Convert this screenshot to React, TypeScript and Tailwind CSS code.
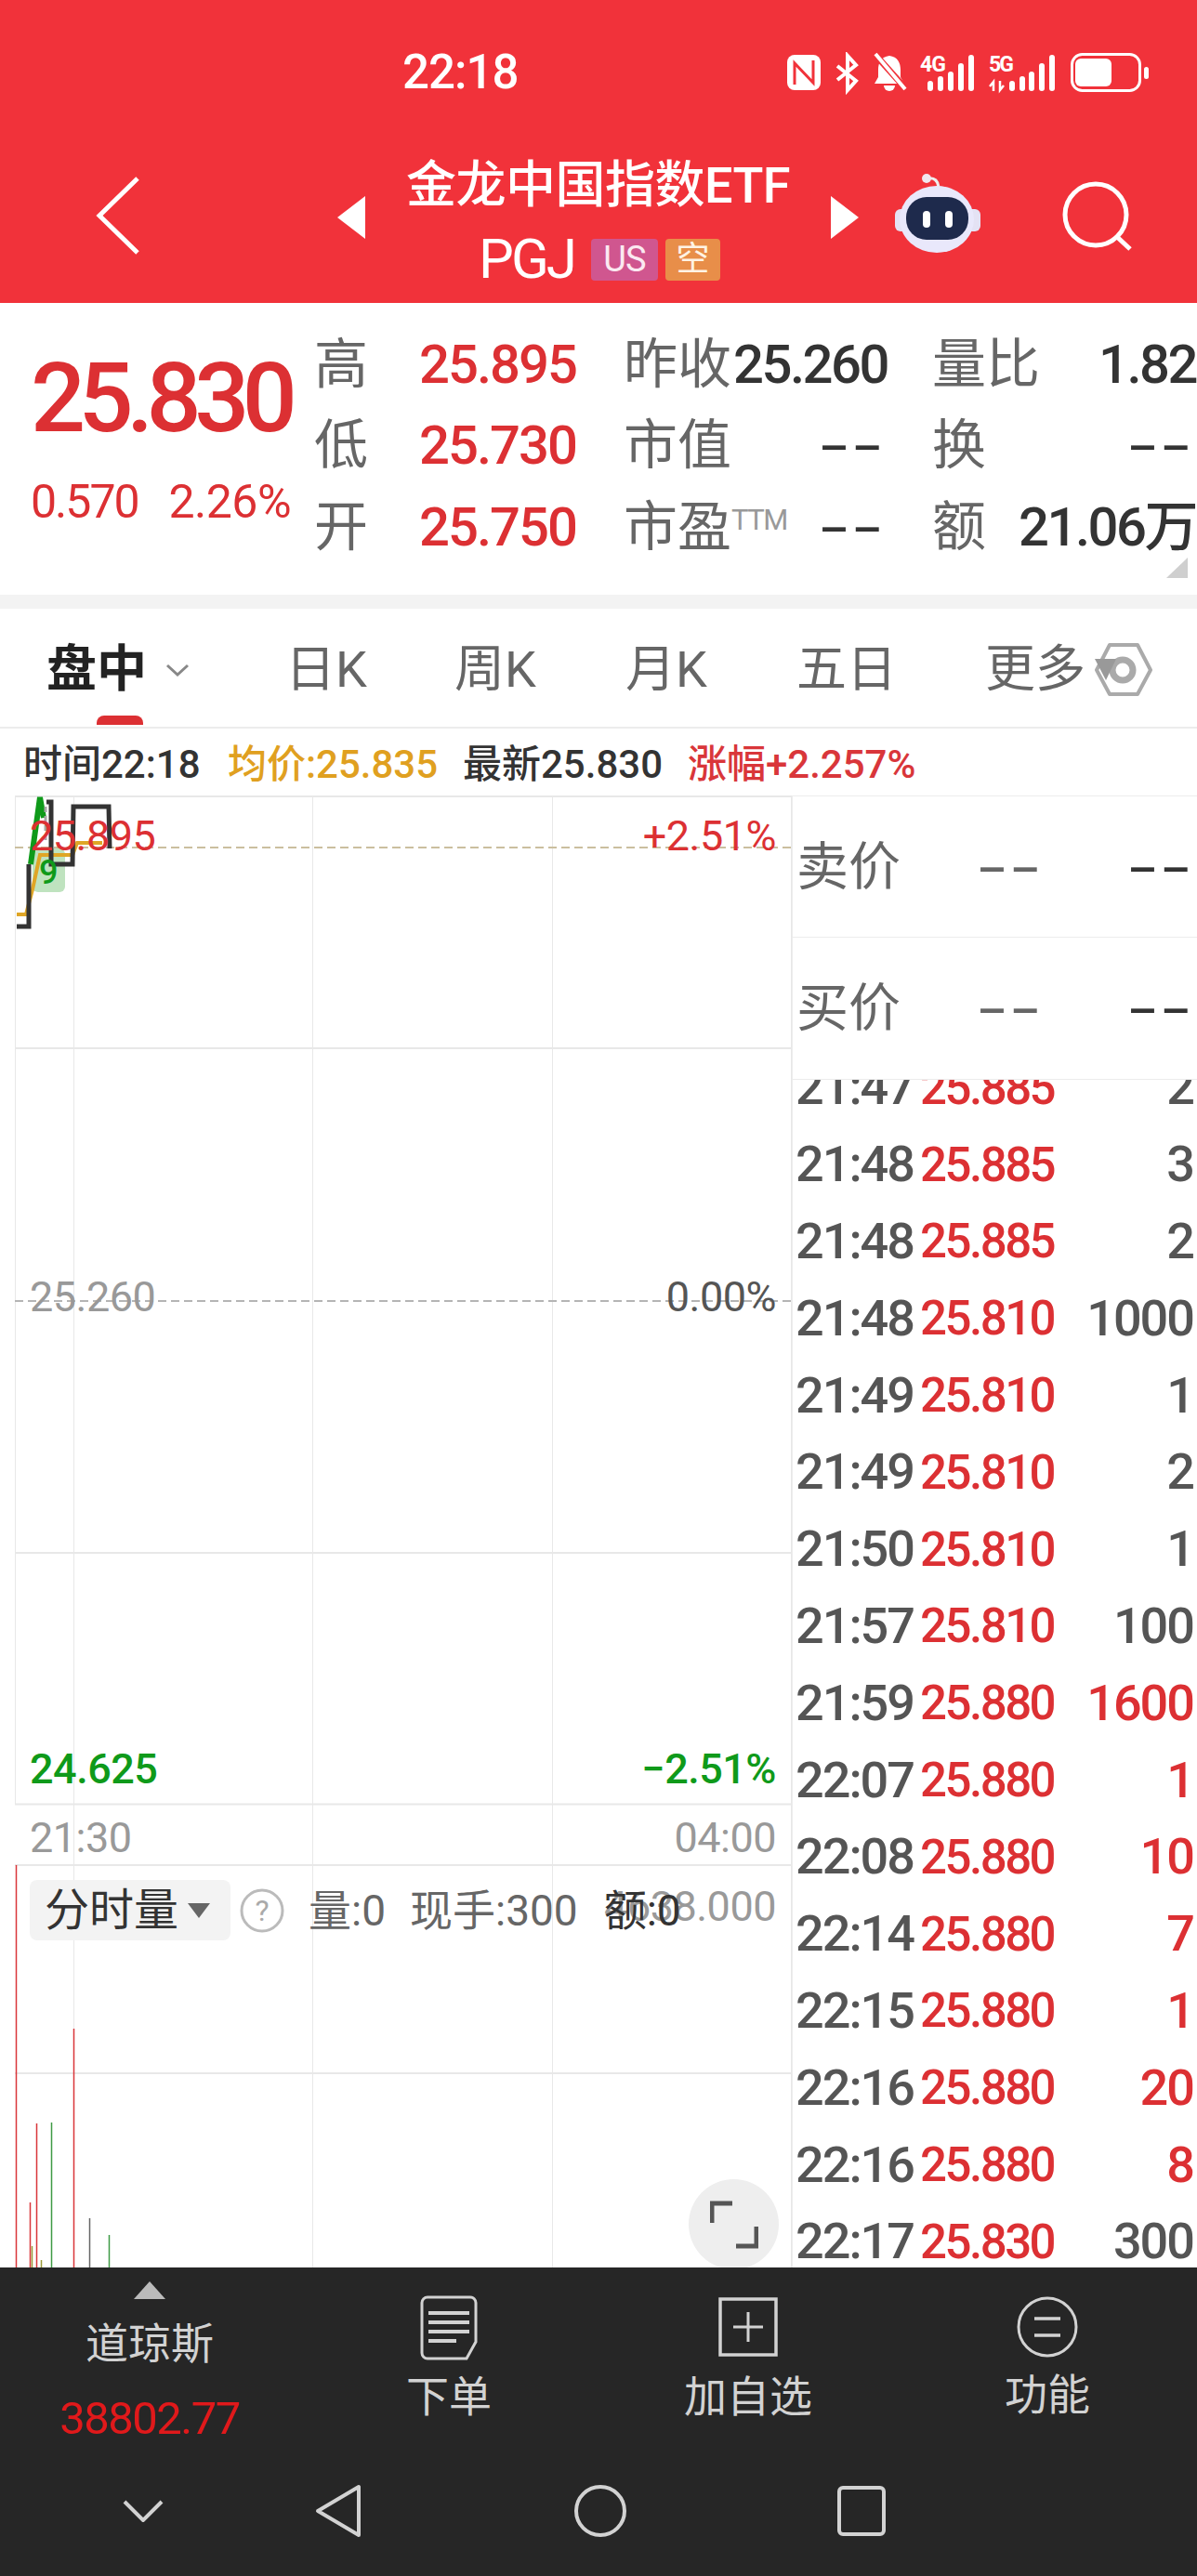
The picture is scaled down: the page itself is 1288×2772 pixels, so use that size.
import React from 'react';

const trades: [string, string, string, boolean][] = [
    ['21:47', '25.885', '2', false],
    ['21:48', '25.885', '3', false],
    ['21:48', '25.885', '2', false],
    ['21:48', '25.810', '1000', false],
    ['21:49', '25.810', '1', false],
    ['21:49', '25.810', '2', false],
    ['21:50', '25.810', '1', false],
    ['21:57', '25.810', '100', false],
    ['21:59', '25.880', '1600', true],
    ['22:07', '25.880', '1', true],
    ['22:08', '25.880', '10', true],
    ['22:14', '25.880', '7', true],
    ['22:15', '25.880', '1', true],
    ['22:16', '25.880', '20', true],
    ['22:16', '25.880', '8', true],
    ['22:17', '25.830', '300', false],
];

const StatusIcons = () => (
    <svg width="392" height="46" viewBox="846 56 392 46" fill="none">
        <rect x="847" y="59" width="36" height="38" rx="8" fill="#fff" />
        <path d="M855 91V68L875 89V65" stroke="#f1323a" strokeWidth="3" />
        <path d="M901 71L921 87L912 97V60L921 70L901 86" stroke="#fff" strokeWidth="4" />
        <path d="M957 60c-9 1-12 8-12 15v8l-4 7h32l-4-7v-8c0-7-3-14-12-15z" fill="#fff" />
        <path d="M951 92h12a6 6 0 0 1-12 0z" fill="#fff" />
        <path d="M941 58L976 97" stroke="#f1323a" strokeWidth="7" />
        <path d="M942 58L974 96" stroke="#fff" strokeWidth="4" />
        <text x="990" y="77" fill="#fff" fontSize="23" fontWeight="700" fontFamily="Roboto" textLength="28">4G</text>
        {[[998, 87], [1009, 82], [1020, 77], [1031, 68], [1042, 59]].map(([x, y]) => (
            <rect key={x} x={x} y={y} width="6" height={98 - y} rx="3" fill="#fff" />
        ))}
        <text x="1064" y="77" fill="#fff" fontSize="23" fontWeight="700" fontFamily="Roboto" textLength="27">5G</text>
        <path d="M1069 98V88l-4 5M1076 87v10l4-5" stroke="#fff" strokeWidth="2.500" />
        {[[1086, 87], [1097, 82], [1107, 77], [1118, 68], [1129, 59]].map(([x, y]) => (
            <rect key={x} x={x} y={y} width="6" height={98 - y} rx="3" fill="#fff" />
        ))}
        <rect x="1153.500" y="58.500" width="73" height="39" rx="11" stroke="#fff" strokeWidth="3" />
        <rect x="1157" y="63" width="39" height="30" rx="6" fill="#fff" />
        <rect x="1231" y="72" width="5" height="13" rx="2.500" fill="#fff" />
    </svg>
);

const Robot = () => (
    <svg width="94" height="86" viewBox="962 187 94 86">
        <path d="M998 192c7-1 11 2 12 9" stroke="#eee" strokeWidth="3" fill="none" />
        <circle cx="997" cy="192" r="5" fill="#f1e6ee" />
        <rect x="963" y="225" width="92" height="24" rx="6" fill="#e4e2f4" />
        <ellipse cx="1008" cy="236" rx="40" ry="36" fill="#e9e8fb" />
        <rect x="975" y="212" width="67" height="46" rx="22" fill="#1e2a4c" />
        <rect x="993" y="227" width="8" height="18" rx="4" fill="#fff" />
        <rect x="1017" y="227" width="8" height="18" rx="4" fill="#fff" />
    </svg>
);

const Tri = ({ dir }: { dir: 'l' | 'r' }) => (
    <svg width="30" height="46" viewBox="0 0 30 46" fill="#fff">
        <path d={dir === 'l' ? 'M30 0V46L0 23z' : 'M0 0V46L30 23z'} />
    </svg>
);

const PriceChart = () => (
    <svg className="absolute inset-0" width="852" height="1584" viewBox="0 856 852 1584" fill="none">
        {/* grid */}
        <path d="M16 857H851M16 1128H851M16 1671H851M16 1941.500H851M16 2007H851M16 2231H851" stroke="#e8e8e8" strokeWidth="2" />
        <path d="M16.500 856V1941M851.500 856V2440M79.500 856V2440M336.500 856V2440M594.500 856V2440" stroke="#e8e8e8" strokeWidth="1" />
        <path d="M16 1400H851" stroke="#b5b5b5" strokeWidth="2" strokeDasharray="9 5" />
        <path d="M16 912H851" stroke="#cbbf9f" strokeWidth="2" strokeDasharray="9 5" />
        {/* badge */}
        <rect x="35" y="913" width="35" height="47" rx="6" fill="#bfe3bf" />
        {/* avg line */}
        <path d="M18 984H28L35 957L43 920H78L83 907H110" stroke="#dfa626" strokeWidth="4" />
        {/* price */}
        <path d="M18 997H31V930" stroke="#333" strokeWidth="5" />
        <path d="M50 863H55V930H78L79 868H117L118 913" stroke="#333" strokeWidth="5" />
        <path d="M33 930L43 858L47 880" stroke="#0f9a1a" strokeWidth="6" />
        <path d="M49 868V905" stroke="#a8a8a8" strokeWidth="3" strokeDasharray="6 4" />
        {/* volume */}
        <path d="M17.500 2007V2440M39.500 2285V2440M79.500 2183V2440M32.500 2370V2440" stroke="#d9363a" strokeWidth="1.500" />
        <path d="M55.500 2284V2440M117.500 2405V2440" stroke="#3f9a45" strokeWidth="1.500" />
        <path d="M96.500 2387V2440" stroke="#666" strokeWidth="1.500" />
        <path d="M34.500 2417V2440M44.500 2432V2440" stroke="#9a9a3a" strokeWidth="1.500" />
    </svg>
);

const Dash = ({ className }: { className: string }) => (
    <span className={`inline-block origin-right scale-x-[1.7] -mt-[4px] font-['Liberation_Sans',sans-serif] text-[60px] leading-none tracking-[1px] ${className}`}>--</span>
);

const QuoteCell = ({ label, sup, children }: { label: string; sup?: string; children: React.ReactNode }) => (
    <div className="flex items-center justify-between h-[87.500px]">
        <span className="text-[58px] leading-none text-[#666] flex items-start">
            {label}
            {sup && <span className="text-[31px] leading-none mt-[6px] tracking-[-1.500px] text-[#999]">{sup}</span>}
        </span>
        {children}
    </div>
);

const Red = ({ v }: { v: string }) => (
    <span className="text-[58px] leading-none font-medium tracking-[-2px] text-[#dc3033]">{v}</span>
);
const Dark = ({ v }: { v: string }) => (
    <span className="text-[58px] leading-none font-medium tracking-[-2.500px] -mr-[3px] text-[#333]">{v}</span>
);

export default function App() {
    return (
        <div className="w-[1288px] h-[2772px] overflow-hidden bg-white flex flex-col font-[Roboto,'Noto_Sans_CJK_SC',sans-serif]">
            {/* header */}
            <div className="h-[326px] bg-[#f1323a] text-white">
                <div className="h-[156px] flex items-start pt-[56px] pl-[433px] pr-[50px]">
                    <span className="text-[51px] leading-[44px] font-medium tracking-[-1px]">22:18</span>
                    <div className="ml-auto">
                        <StatusIcons />
                    </div>
                </div>
                <div className="flex items-start">
                    <svg className="ml-[103px] mt-[34px]" width="48" height="84" viewBox="0 0 48 84" fill="none">
                        <path d="M45 2L4 42L45 82" stroke="#fff" strokeWidth="5" />
                    </svg>
                    <div className="ml-[212px] mt-[55px]">
                        <Tri dir="l" />
                    </div>
                    <div className="w-[501px] flex flex-col items-center">
                        <div className="text-[54px] leading-[60px] mt-[14px] font-medium tracking-[-0.500px] whitespace-nowrap">金龙中国指数ETF</div>
                        <div className="flex items-center mt-[26px] pl-[3px]">
                            <span className="text-[60px] leading-[46px] tracking-[-3px]">PGJ</span>
                            <span className="ml-[18px] w-[72px] h-[45px] rounded bg-[#d0568f] flex items-center justify-center text-[38px] leading-none tracking-[-1px] text-[#fbe9f1]">US</span>
                            <span className="ml-[8px] w-[59px] h-[45px] rounded bg-[#e88e49] flex items-center justify-center text-[36px] leading-none text-[#fff3e4]">空</span>
                        </div>
                    </div>
                    <div className="mt-[55px]">
                        <Tri dir="r" />
                    </div>
                    <div className="ml-[38px] mt-[31px]">
                        <Robot />
                    </div>
                    <svg className="ml-[86px] mt-[38px]" width="80" height="80" viewBox="0 0 80 80" fill="none">
                        <circle cx="37" cy="37" r="33" stroke="#fff" strokeWidth="5" />
                        <path d="M60 61L74 74" stroke="#fff" strokeWidth="5" />
                    </svg>
                </div>
            </div>

            {/* quote */}
            <div className="h-[314px] relative flex">
                <div className="w-[338px] pl-[33px]">
                    <div className="mt-[53px] text-[104px] leading-[100px] font-medium tracking-[-7.500px] text-[#dc3033]">25.830</div>
                    <div className="mt-[36px] w-[280px] flex justify-between text-[50px] leading-[50px] tracking-[-2px] text-[#dc3033]">
                        <span>0.570</span>
                        <span className="tracking-[-0.500px]">2.26%</span>
                    </div>
                </div>
                <div className="grid grid-cols-[282px_281px_281px] gap-x-[51px] pt-[22px] h-fit">
                    <QuoteCell label="高"><Red v="25.895" /></QuoteCell>
                    <QuoteCell label="昨收"><Dark v="25.260" /></QuoteCell>
                    <QuoteCell label="量比"><Dark v="1.82" /></QuoteCell>
                    <QuoteCell label="低"><Red v="25.730" /></QuoteCell>
                    <QuoteCell label="市值"><Dash className="text-[#333]" /></QuoteCell>
                    <QuoteCell label="换"><Dash className="text-[#333]" /></QuoteCell>
                    <QuoteCell label="开"><Red v="25.750" /></QuoteCell>
                    <QuoteCell label="市盈" sup="TTM"><Dash className="text-[#333]" /></QuoteCell>
                    <QuoteCell label="额"><Dark v="21.06万" /></QuoteCell>
                </div>
                <svg className="absolute left-[1255px] top-[274px]" width="23" height="22" viewBox="0 0 23 22">
                    <path d="M23 0V22H0z" fill="#cfcfcf" />
                </svg>
            </div>
            <div className="h-[15px] bg-[#f3f3f3]" />

            {/* tabs */}
            <div className="h-[129px] pt-[4px] border-b-2 border-[#ececec] flex items-center pl-[50px] text-[54px] leading-none text-[#666]">
                <div className="w-[257px] relative flex items-center">
                    <span className="font-bold text-[#222]">盘中</span>
                    <svg className="ml-[20px]" width="26" height="14" viewBox="0 0 26 14" fill="none">
                        <path d="M2 2L13 12L24 2" stroke="#888" strokeWidth="3" />
                    </svg>
                    <div className="absolute left-[54px] top-[76px] w-[50px] h-[10px] rounded-t-lg bg-[#dc3033]" />
                </div>
                <span className="w-[182px]">日K</span>
                <span className="w-[184px]">周K</span>
                <span className="w-[184px]">月K</span>
                <span className="w-[203px]">五日</span>
                <span>更多</span>
                <svg className="ml-[10px] shrink-0" width="62" height="58" viewBox="1178 690 62 58" fill="none">
                    <path d="M1194 692H1224L1238 719L1224 745H1194L1180 719z" stroke="#aaa" strokeWidth="4" strokeLinejoin="round" />
                    <circle cx="1208" cy="719" r="11" stroke="#aaa" strokeWidth="7" />
                    <path d="M1178 707H1201L1190 730z" fill="#999" />
                </svg>
            </div>

            {/* info bar */}
            <div className="h-[72px] pt-[6px] flex items-center pl-[25px] text-[42px] leading-none font-medium">
                <span className="w-[220px] text-[#333]">时间22:18</span>
                <span className="w-[253px] text-[#e0a020]">均价:25.835</span>
                <span className="w-[242px] text-[#333]">最新25.830</span>
                <span className="text-[#d9363a]">涨幅+2.257%</span>
            </div>

            {/* chart + trades */}
            <div className="h-[1584px] flex overflow-hidden">
                <div className="relative w-[852px] h-full shrink-0 text-[45px] leading-none tracking-[-0.500px]">
                    <PriceChart />
                    <span className="absolute left-[42px] top-[65px] text-[36px] font-medium text-[#0f9a1a]">9</span>
                    <span className="absolute left-[32px] top-[21px] text-[#dc3033]">25.895</span>
                    <span className="absolute right-[17px] top-[21px] text-[#dc3033]">+2.51%</span>
                    <span className="absolute left-[32px] top-[517px] text-[#999]">25.260</span>
                    <span className="absolute right-[17px] top-[517px] text-[#555]">0.00%</span>
                    <span className="absolute left-[32px] top-[1025px] text-[#0f9a1a] font-medium">24.625</span>
                    <span className="absolute right-[17px] top-[1025px] text-[#0f9a1a] font-medium">−2.51%</span>
                    <span className="absolute left-[32px] top-[1099px] text-[#999]">21:30</span>
                    <span className="absolute right-[17px] top-[1099px] text-[#999]">04:00</span>
                    <span className="absolute right-[17px] top-[1173px] text-[#999]">4638.000</span>
                    <div className="absolute left-[32px] top-[1167px] right-[100px] flex items-center text-[46px] tracking-normal">
                        <div className="w-[216px] h-[65px] rounded-lg bg-[#f3f3f3] flex items-center pl-[16px] text-[#333]">
                            <span className="text-[48px]">分时量</span>
                            <svg className="ml-[10px]" width="24" height="16" viewBox="0 0 24 16">
                                <path d="M0 0H24L12 16z" fill="#666" />
                            </svg>
                        </div>
                        <svg className="ml-[10px]" width="48" height="48" viewBox="0 0 48 48" fill="none">
                            <circle cx="24" cy="24" r="22" stroke="#bbb" strokeWidth="3" />
                            <text x="24" y="35" textAnchor="middle" fontSize="32" fill="#aaa" fontFamily="Roboto">?</text>
                        </svg>
                        <span className="ml-[26px] text-[#666]">量:0</span>
                        <span className="ml-[26px] text-[#666]">现手:300</span>
                        <span className="ml-[28px] text-[#333]">额:0</span>
                    </div>
                    <div className="absolute left-[741px] top-[1489px] w-[97px] h-[97px] rounded-full bg-[#eee] flex items-center justify-center">
                        <svg width="52" height="52" viewBox="0 0 52 52" fill="none">
                            <path d="M2 24V3H24M50 28V49H28" stroke="#555" strokeWidth="5" />
                        </svg>
                    </div>
                </div>
                <div className="flex-1 flex flex-col">
                    <div className="h-[152px] border-t border-l border-[#ececec] flex items-center pl-[4px] pr-[4px]">
                        <span className="text-[56px] leading-none text-[#666]">卖价</span>
                        <Dash className="ml-auto text-[#666]" />
                        <Dash className="ml-[120px] text-[#333]" />
                    </div>
                    <div className="h-[154px] border-t border-b border-l border-[#ececec] flex items-center pl-[4px] pr-[4px]">
                        <span className="text-[56px] leading-none text-[#666]">买价</span>
                        <Dash className="ml-auto text-[#666]" />
                        <Dash className="ml-[120px] text-[#333]" />
                    </div>
                    <div className="flex-1 overflow-hidden border-l border-[#ececec] pl-[3px] pr-[4px]">
                        <div className="-mt-[33px]">
                            {trades.map(([t, p, q, red], i) => (
                                <div key={i} className="h-[82.800px] flex items-center text-[54px] leading-none tracking-[-2px] font-medium">
                                    <span className="w-[134px] text-[#555]">{t}</span>
                                    <span className="text-[#dc3033] tracking-[-2.500px] text-[51px]">{p}</span>
                                    <span className={`ml-auto ${red ? 'text-[#dc3033]' : 'text-[#555]'}`}>{q}</span>
                                </div>
                            ))}
                        </div>
                    </div>
                </div>
            </div>

            {/* bottom bar */}
            <div className="h-[332px] bg-[#262626] text-[#d2d2d2]">
                <div className="grid grid-cols-4 h-[222px] text-[46px] leading-none">
                    <div className="flex flex-col items-center pt-[15px]">
                        <svg width="34" height="19" viewBox="0 0 34 19"><path d="M17 0L34 19H0z" fill="#bbb" /></svg>
                        <span className="mt-[25px]">道琼斯</span>
                        <span className="mt-[33px] text-[49px] text-[#e0191b] tracking-[-1.500px]">38802.77</span>
                    </div>
                    <div className="flex flex-col items-center pt-[30px]">
                        <svg width="62" height="70" viewBox="0 0 62 70" fill="none" stroke="#d2d2d2">
                            <path d="M8 2H54a6 6 0 0 1 6 6V50L50 68H8a6 6 0 0 1-6-6V8a6 6 0 0 1 6-6z" strokeWidth="3" />
                            <path d="M9 19H53M9 29H53M9 39H53M9 49H39" strokeWidth="4" />
                        </svg>
                        <span className="mt-[16px]">下单</span>
                    </div>
                    <div className="flex flex-col items-center pt-[32px]">
                        <svg width="64" height="64" viewBox="0 0 64 64" fill="none" stroke="#d2d2d2">
                            <rect x="2" y="2" width="60" height="60" strokeWidth="3.500" />
                            <path d="M32 16V48M16 32H48" strokeWidth="3" />
                        </svg>
                        <span className="mt-[20px]">加自选</span>
                    </div>
                    <div className="flex flex-col items-center pt-[30px]">
                        <svg width="66" height="68" viewBox="0 0 66 68" fill="none" stroke="#d2d2d2">
                            <circle cx="33" cy="34" r="31" strokeWidth="3" />
                            <path d="M19 25H47M19 43H47" strokeWidth="3.500" />
                        </svg>
                        <span className="mt-[16px]">功能</span>
                    </div>
                </div>
                <div className="flex items-center h-[70px] mt-[5px] pl-[132px]">
                    <svg width="44" height="24" viewBox="0 0 44 24" fill="none">
                        <path d="M2 2L22 22L42 2" stroke="#d2d2d2" strokeWidth="4" />
                    </svg>
                    <svg className="ml-[163px]" width="50" height="58" viewBox="0 0 50 58" fill="none">
                        <path d="M47 3V55L3 29z" stroke="#d2d2d2" strokeWidth="4" strokeLinejoin="round" />
                    </svg>
                    <svg className="ml-[228px]" width="58" height="58" viewBox="0 0 58 58" fill="none">
                        <circle cx="29" cy="29" r="26" stroke="#d2d2d2" strokeWidth="4" />
                    </svg>
                    <svg className="ml-[226px]" width="52" height="54" viewBox="0 0 52 54" fill="none">
                        <rect x="2" y="2" width="48" height="50" rx="4" stroke="#d2d2d2" strokeWidth="4" />
                    </svg>
                </div>
            </div>
        </div>
    );
}
